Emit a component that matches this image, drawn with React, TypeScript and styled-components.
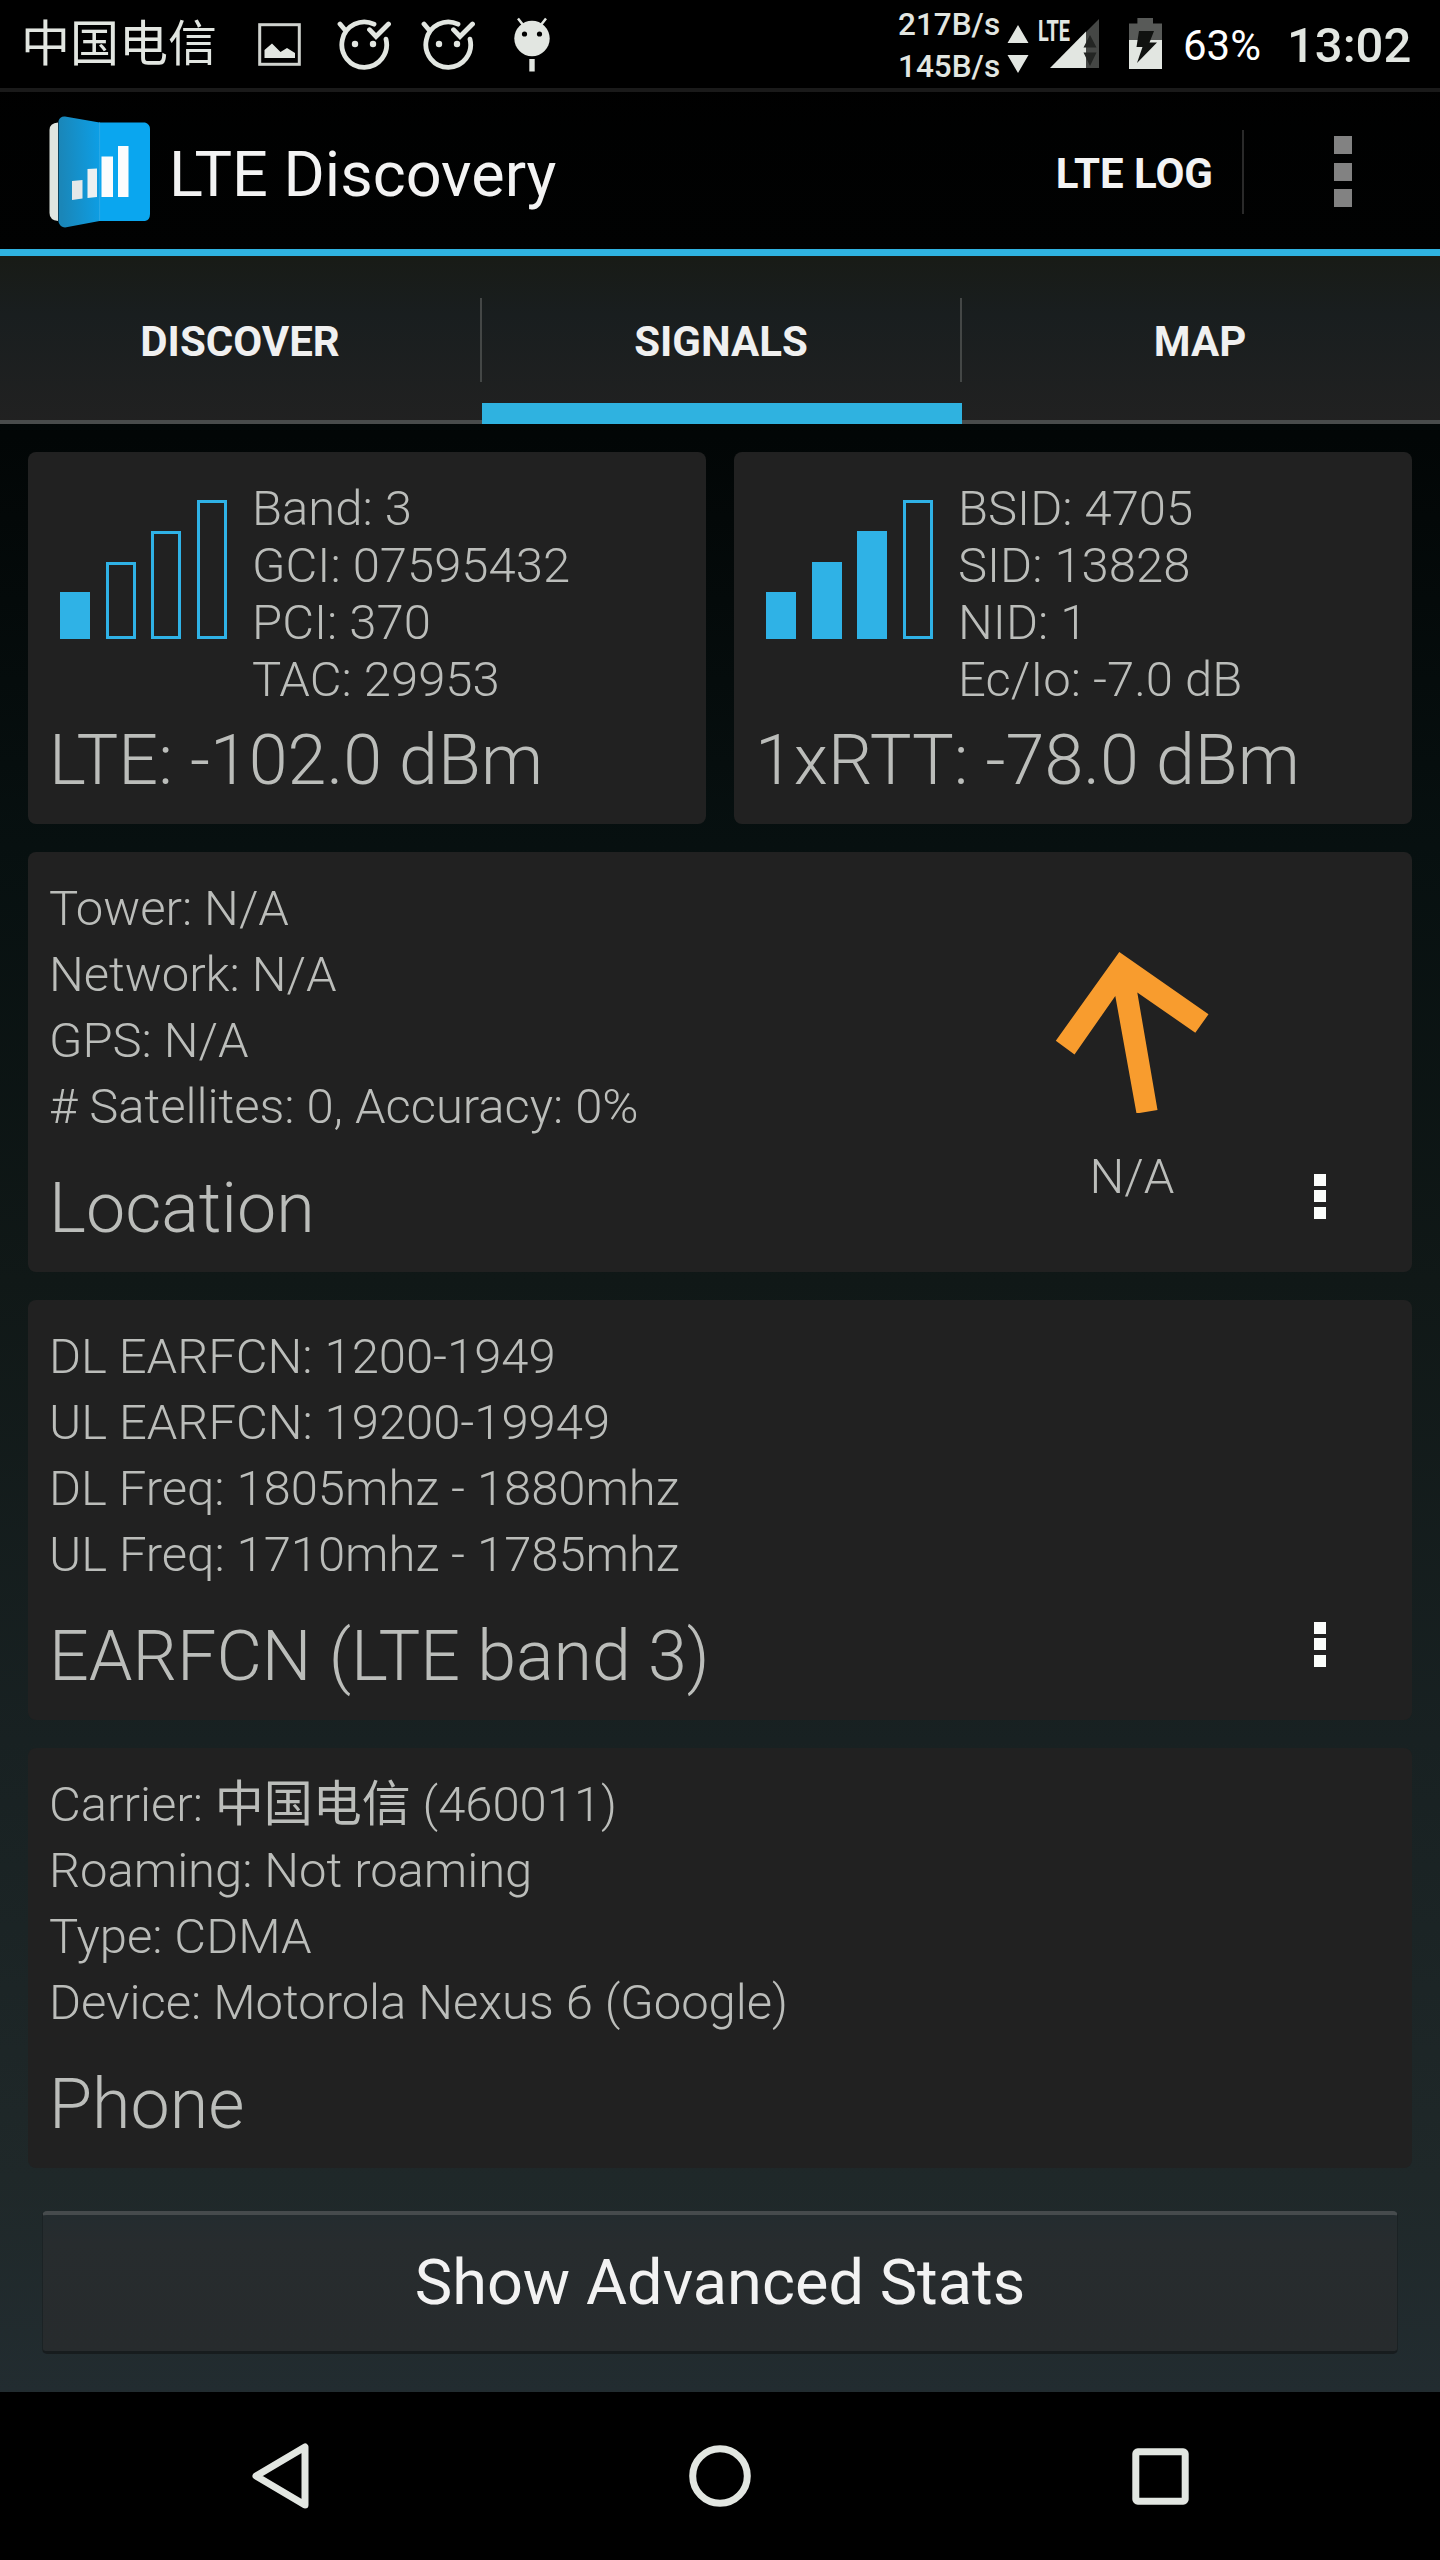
import React from "react";
import styled, { createGlobalStyle } from "styled-components";

const GlobalStyle = createGlobalStyle`
  * { box-sizing: border-box; }
  body {
    margin: 0;
    background: #000;
    font-family: Roboto, "Noto Sans CJK SC", sans-serif;
    -webkit-font-smoothing: antialiased;
  }
`;

const Screen = styled.div`
  width: 1440px;
  height: 2560px;
  display: flex;
  flex-direction: column;
  overflow: hidden;
  background: linear-gradient(#000000 0%, #010202 10%, #020606 17%, #071010 33%, #101817 50%, #182122 68%, #1f2829 85%, #222c30 93.4%);
`;

const StatusBar = styled.header`
  height: 92px;
  flex: none;
  display: flex;
  align-items: flex-start;
  justify-content: space-between;
  border-bottom: 4px solid #1a1a1a;
  background: #000;
  color: #e2e6e1;
`;

const StatusGroup = styled.div`
  display: flex;
  height: 88px;
  align-items: center;
`;

const Glyph = styled.svg<{ $gap?: number }>`
  display: block;
  flex: none;
  margin-left: ${(p) => p.$gap ?? 0}px;
`;

const Carrier = styled.span`
  margin-left: 21px;
  width: 197px;
  padding-top: 2px;
  font-size: 49px;
  line-height: 88px;
  white-space: nowrap;
`;

const Rates = styled.div`
  display: flex;
  flex-direction: column;
  width: 109px;
  padding-top: 4px;
  font-size: 31.5px;
  font-weight: 500;
  line-height: 42px;
  white-space: nowrap;
`;

const BatteryLevel = styled.span`
  margin-left: 21px;
  width: 80px;
  padding-top: 4px;
  font-size: 42px;
  line-height: 88px;
  color: #fff;
`;

const Clock = styled.span`
  margin-left: 24px;
  width: 153px;
  padding-top: 3px;
  font-size: 49px;
  font-weight: 500;
  line-height: 88px;
`;

const ActionBar = styled.div`
  height: 164px;
  flex: none;
  display: flex;
  align-items: center;
  border-bottom: 7px solid #2fb2e0;
  padding: 2px 88px 0 49px;
`;

const AppTitle = styled.h1`
  margin: 0 auto 0 18px;
  padding-top: 6px;
  font-size: 63px;
  font-weight: 400;
  line-height: 84px;
  color: #f3f3f3;
`;

const LogAction = styled.button`
  border: 0;
  background: none;
  padding: 2px 29px 0 0;
  height: 84px;
  border-right: 2px solid #2a2a2a;
  font: 700 42px/84px Roboto, sans-serif;
  color: #f3f3f3;
`;

const Dots = styled.div<{ $size: number; $gap: number; $color: string }>`
  display: flex;
  flex-direction: column;
  gap: ${(p) => p.$gap}px;
  & > i {
    width: ${(p) => p.$size}px;
    height: ${(p) => p.$size}px;
    background: ${(p) => p.$color};
  }
`;

const HeaderMenu = styled.div`
  margin-left: 90px;
`;

const Tabs = styled.nav`
  height: 168px;
  flex: none;
  display: grid;
  grid-template-columns: 482px 480px 478px;
  background: linear-gradient(#181b16, #191e1f 35%, #212121);
`;

const Tab = styled.div<{ $active?: boolean }>`
  display: flex;
  flex-direction: column;
  justify-content: space-between;
  border-bottom: ${(p) => (p.$active ? "21px solid #2fb2e0" : "4px solid #494b4b")};
  padding-top: 42px;
  height: 168px;
`;

const TabLabel = styled.span<{ $divided?: boolean }>`
  display: block;
  height: 84px;
  border-right: 2px solid ${(p) => (p.$divided ? "#444746" : "transparent")};
  text-align: center;
  font-size: 42px;
  font-weight: 700;
  line-height: 88px;
  color: #f0f0f0;
`;

const Content = styled.main`
  flex: 1;
  display: flex;
  flex-direction: column;
  gap: 28px;
  padding: 28px 28px 0;
`;

const SignalRow = styled.div`
  display: grid;
  grid-template-columns: 1fr 1fr;
  gap: 28px;
`;

const Card = styled.section`
  border-radius: 8px;
  background: #212121;
  color: #bbbdba;
  font-weight: 300;
  white-space: nowrap;
`;

const SignalCard = styled(Card)`
  height: 372px;
  padding: 28px 21px 0;
`;

const SignalTop = styled.div`
  display: flex;
`;

const Bars = styled.div`
  display: flex;
  align-items: flex-end;
  gap: 15.5px;
  width: 203px;
  height: 159px;
  padding-left: 11px;
`;

const Bar = styled.div<{ $height: number; $filled: boolean }>`
  width: 30px;
  height: ${(p) => p.$height}px;
  border: 3px solid #2fb2e6;
  background: ${(p) => (p.$filled ? "#2fb2e6" : "transparent")};
`;

const Line = styled.div<{ $pitch: number; $tracking?: number }>`
  font-size: 49px;
  line-height: ${(p) => p.$pitch}px;
  letter-spacing: ${(p) => p.$tracking ?? 0}px;
`;

const Han = styled.span`
  font-weight: 400;
`;

const CardTitle = styled.h2<{ $gap: number }>`
  margin: ${(p) => p.$gap}px 0 0;
  font-size: 70px;
  font-weight: 300;
  line-height: 82px;
`;

const InfoCard = styled(Card)`
  height: 420px;
  padding: 24px 86px 0 21px;
  display: flex;
`;

const InfoText = styled.div`
  flex: 1;
`;

const Compass = styled.div`
  width: 154px;
  margin-right: 105px;
  padding-top: 75px;
  display: flex;
  flex-direction: column;
  align-items: center;
`;

const CompassLabel = styled.span`
  margin-top: 31px;
  font-size: 49px;
  line-height: 66px;
`;

const CardMenu = styled.div`
  padding-top: 298px;
`;

const AdvancedButton = styled.button`
  height: 143px;
  margin: 15px 14px 0;
  border: 1px solid #1b2224;
  border-top: 4px solid #464b4d;
  border-bottom: 3px solid #171c1e;
  border-radius: 5px;
  background: linear-gradient(#242c2f, #272c2e 20%, #272b2d);
  font: 400 63px/136px Roboto, sans-serif;
  letter-spacing: 0.05px;
  color: #f2f2f2;
  padding: 0;
`;

const NavBar = styled.footer`
  height: 168px;
  flex: none;
  display: flex;
  align-items: center;
  background: #000;
  padding-left: 252px;
`;

const PictureIcon = () => (
  <Glyph $gap={40} width="43" height="43" viewBox="0 0 43 43" fill="none">
    <rect x="1.7" y="1.7" width="39.6" height="39.6" stroke="#cfd2ce" strokeWidth="3" />
    <path d="M6.500 35V27L14 20.500L22.500 29L29 25L37 30V35Z" fill="#e2e6e1" />
  </Glyph>
);

const CatIcon = ({ gap }: { gap: number }) => (
  <Glyph $gap={gap} width="54" height="54" viewBox="337 17 54 54" fill="none" stroke="#e2e6e1" strokeWidth="4.800" strokeLinecap="round">
    <path d="M374 24.200A22.400 22.700 0 1 0 386 39.200" />
    <path d="M340 24L345.500 30.500" />
    <path d="M369.500 29.700L376 36.500L388.500 24" />
    <circle cx="355" cy="44" r="3.2" fill="#e2e6e1" stroke="none" />
    <circle cx="373" cy="44" r="3.2" fill="#e2e6e1" stroke="none" />
  </Glyph>
);

const DroidIcon = () => (
  <Glyph $gap={39} width="36" height="55" viewBox="514 17 36 55">
    <path d="M518 18.500L523.500 25.500M546 18.500L540.500 25.500" stroke="#e2e6e1" strokeWidth="2.500" />
    <ellipse cx="532" cy="38.5" rx="17.7" ry="17.8" fill="#e2e6e1" />
    <circle cx="524.500" cy="34" r="2.6" fill="#000" />
    <circle cx="539.500" cy="34" r="2.6" fill="#000" />
    <path d="M529.300 59H534.700V71.500H529.300Z" fill="#e2e6e1" />
  </Glyph>
);

const SignalIcon = () => (
  <Glyph width="92" height="88" viewBox="1007 0 92 88">
    <path d="M1007.5 43L1018 25L1028.5 43Z M1007.5 55L1018 73L1028.5 55Z" fill="#e2e6e1" />
    <path d="M1086 31.5V68H1050Z" fill="#e2e6e1" />
    <path d="M1099 19V68H1086V32Z" fill="#454745" />
    <path d="M1083.5 47.5L1090 35L1096.5 47.5Z M1083.5 52.5L1090 66L1096.5 52.5Z" fill="#232523" />
    <text x="1038" y="41" fontSize="29" fontWeight="700" textLength="32" lengthAdjust="spacingAndGlyphs" fill="#e2e6e1">LTE</text>
  </Glyph>
);

const BatteryIcon = () => (
  <Glyph $gap={30} width="33" height="88" viewBox="1129 0 33 88">
    <path d="M1129 40V23.5H1137.4V18H1153V23.5H1162V40Z" fill="#585a58" />
    <path d="M1129 40H1162V69H1129Z" fill="#e2e6e1" />
    <path d="M1139 31H1154L1149.5 42.5H1157L1137 63L1142.5 47H1136.5Z" fill="#101210" />
  </Glyph>
);

const AppLogo = () => (
  <Glyph width="102" height="114" viewBox="49 115 102 114">
    <defs>
      <linearGradient id="fold" x1="0" x2="1" y1="0.1" y2="0">
        <stop offset="0" stopColor="#1a86b8" />
        <stop offset="1" stopColor="#0d9fe6" />
      </linearGradient>
    </defs>
    <path d="M58 122.5Q49.500 123 49.500 130V213Q49.500 220 58 221Z" fill="#dfe5e0" />
    <path d="M99 122.500H145Q150 124 150 129V214Q150 220 145 221H99Z" fill="#0aa6ef" />
    <path d="M58.500 121Q60 116 65 116.500L99.500 122.500V221L65 227.500Q60 227 58.500 222Z" fill="url(#fold)" />
    <path d="M99.600 122.500V221" stroke="#35a9e2" strokeWidth="0.8" />
    <path d="M72 181L82.500 180V198.500L72 200Z" fill="#e4e8e9" />
    <path d="M87.500 169L97 168.500V197L87.500 198Z" fill="#edf0f1" />
    <path d="M101.500 156.500H113V197H101.500Z M118 146H128.500V197H118Z" fill="#fbfcfd" />
  </Glyph>
);

const Arrow = () => (
  <svg width="154" height="162" viewBox="1055 951 154 162">
    <path d="M1119.300 952L1208.500 1014.300L1195.300 1032.700L1137.300 992.500L1157.500 1110L1136.500 1113.500L1115.300 996L1074.500 1054.500L1055.800 1040.700Z" fill="#f89c2e" />
  </svg>
);

const MenuDots = ({ size, gap, color }: { size: number; gap: number; color: string }) => (
  <Dots $size={size} $gap={gap} $color={color}>
    <i />
    <i />
    <i />
  </Dots>
);

const BAR_HEIGHTS = [47, 77, 108, 139];

interface SignalProps {
  level: number;
  lines: string[];
  title: string;
}

const Signal = ({ level, lines, title }: SignalProps) => (
  <SignalCard>
    <SignalTop>
      <Bars>
        {BAR_HEIGHTS.map((h, i) => (
          <Bar key={h} $height={h} $filled={i < level} />
        ))}
      </Bars>
      <div>
        {lines.map((l) => (
          <Line key={l} $pitch={57}>{l}</Line>
        ))}
      </div>
    </SignalTop>
    <CardTitle $gap={11}>{title}</CardTitle>
  </SignalCard>
);

interface InfoProps {
  lines: React.ReactNode[];
  title: string;
  menu?: boolean;
  children?: React.ReactNode;
}

const Info = ({ lines, title, menu, children }: InfoProps) => (
  <InfoCard>
    <InfoText>
      {lines.map((l, i) => (
        <Line key={i} $pitch={66} $tracking={-0.04}>{l}</Line>
      ))}
      <CardTitle $gap={27}>{title}</CardTitle>
    </InfoText>
    {children}
    {menu && (
      <CardMenu>
        <MenuDots size={12} gap={4.4} color="#fbfdfb" />
      </CardMenu>
    )}
  </InfoCard>
);

export default function App() {
  return (
    <>
      <GlobalStyle />
      <Screen>
        <StatusBar>
          <StatusGroup>
            <Carrier>中国电信</Carrier>
            <PictureIcon />
            <CatIcon gap={36} />
            <CatIcon gap={30} />
            <DroidIcon />
          </StatusGroup>
          <StatusGroup>
            <Rates>
              <span>217B/s</span>
              <span>145B/s</span>
            </Rates>
            <SignalIcon />
            <BatteryIcon />
            <BatteryLevel>63%</BatteryLevel>
            <Clock>13:02</Clock>
          </StatusGroup>
        </StatusBar>
        <ActionBar>
          <AppLogo />
          <AppTitle>LTE Discovery</AppTitle>
          <LogAction>LTE LOG</LogAction>
          <HeaderMenu>
            <MenuDots size={18} gap={8.2} color="#828282" />
          </HeaderMenu>
        </ActionBar>
        <Tabs>
          <Tab>
            <TabLabel $divided>DISCOVER</TabLabel>
          </Tab>
          <Tab $active>
            <TabLabel $divided>SIGNALS</TabLabel>
          </Tab>
          <Tab>
            <TabLabel>MAP</TabLabel>
          </Tab>
        </Tabs>
        <Content>
          <SignalRow>
            <Signal level={1} lines={["Band: 3", "GCI: 07595432", "PCI: 370", "TAC: 29953"]} title="LTE: -102.0 dBm" />
            <Signal level={3} lines={["BSID: 4705", "SID: 13828", "NID: 1", "Ec/Io: -7.0 dB"]} title="1xRTT: -78.0 dBm" />
          </SignalRow>
          <Info menu lines={["Tower: N/A", "Network: N/A", "GPS: N/A", "# Satellites: 0, Accuracy: 0%"]} title="Location">
            <Compass>
              <Arrow />
              <CompassLabel>N/A</CompassLabel>
            </Compass>
          </Info>
          <Info
            menu
            lines={["DL EARFCN: 1200-1949", "UL EARFCN: 19200-19949", "DL Freq: 1805mhz - 1880mhz", "UL Freq: 1710mhz - 1785mhz"]}
            title="EARFCN (LTE band 3)"
          />
          <Info
            lines={[
              <>Carrier: <Han>中国电信</Han> (460011)</>,
              "Roaming: Not roaming",
              "Type: CDMA",
              "Device: Motorola Nexus 6 (Google)",
            ]}
            title="Phone"
          />
          <AdvancedButton>Show Advanced Stats</AdvancedButton>
        </Content>
        <NavBar>
          <Glyph width="57" height="66" viewBox="0 0 57 66" fill="none" stroke="#e2e6e1" strokeWidth="7" strokeLinejoin="round">
            <path d="M53 4V62L4 33Z" />
          </Glyph>
          <Glyph $gap={380} width="62" height="62" viewBox="0 0 62 62" fill="none" stroke="#e2e6e1" strokeWidth="7">
            <circle cx="31" cy="31" r="27.3" />
          </Glyph>
          <Glyph $gap={381} width="57" height="57" viewBox="0 0 57 57" fill="none" stroke="#e2e6e1" strokeWidth="7">
            <rect x="3.800" y="3.800" width="49.400" height="49.400" rx="2" />
          </Glyph>
        </NavBar>
      </Screen>
    </>
  );
}
